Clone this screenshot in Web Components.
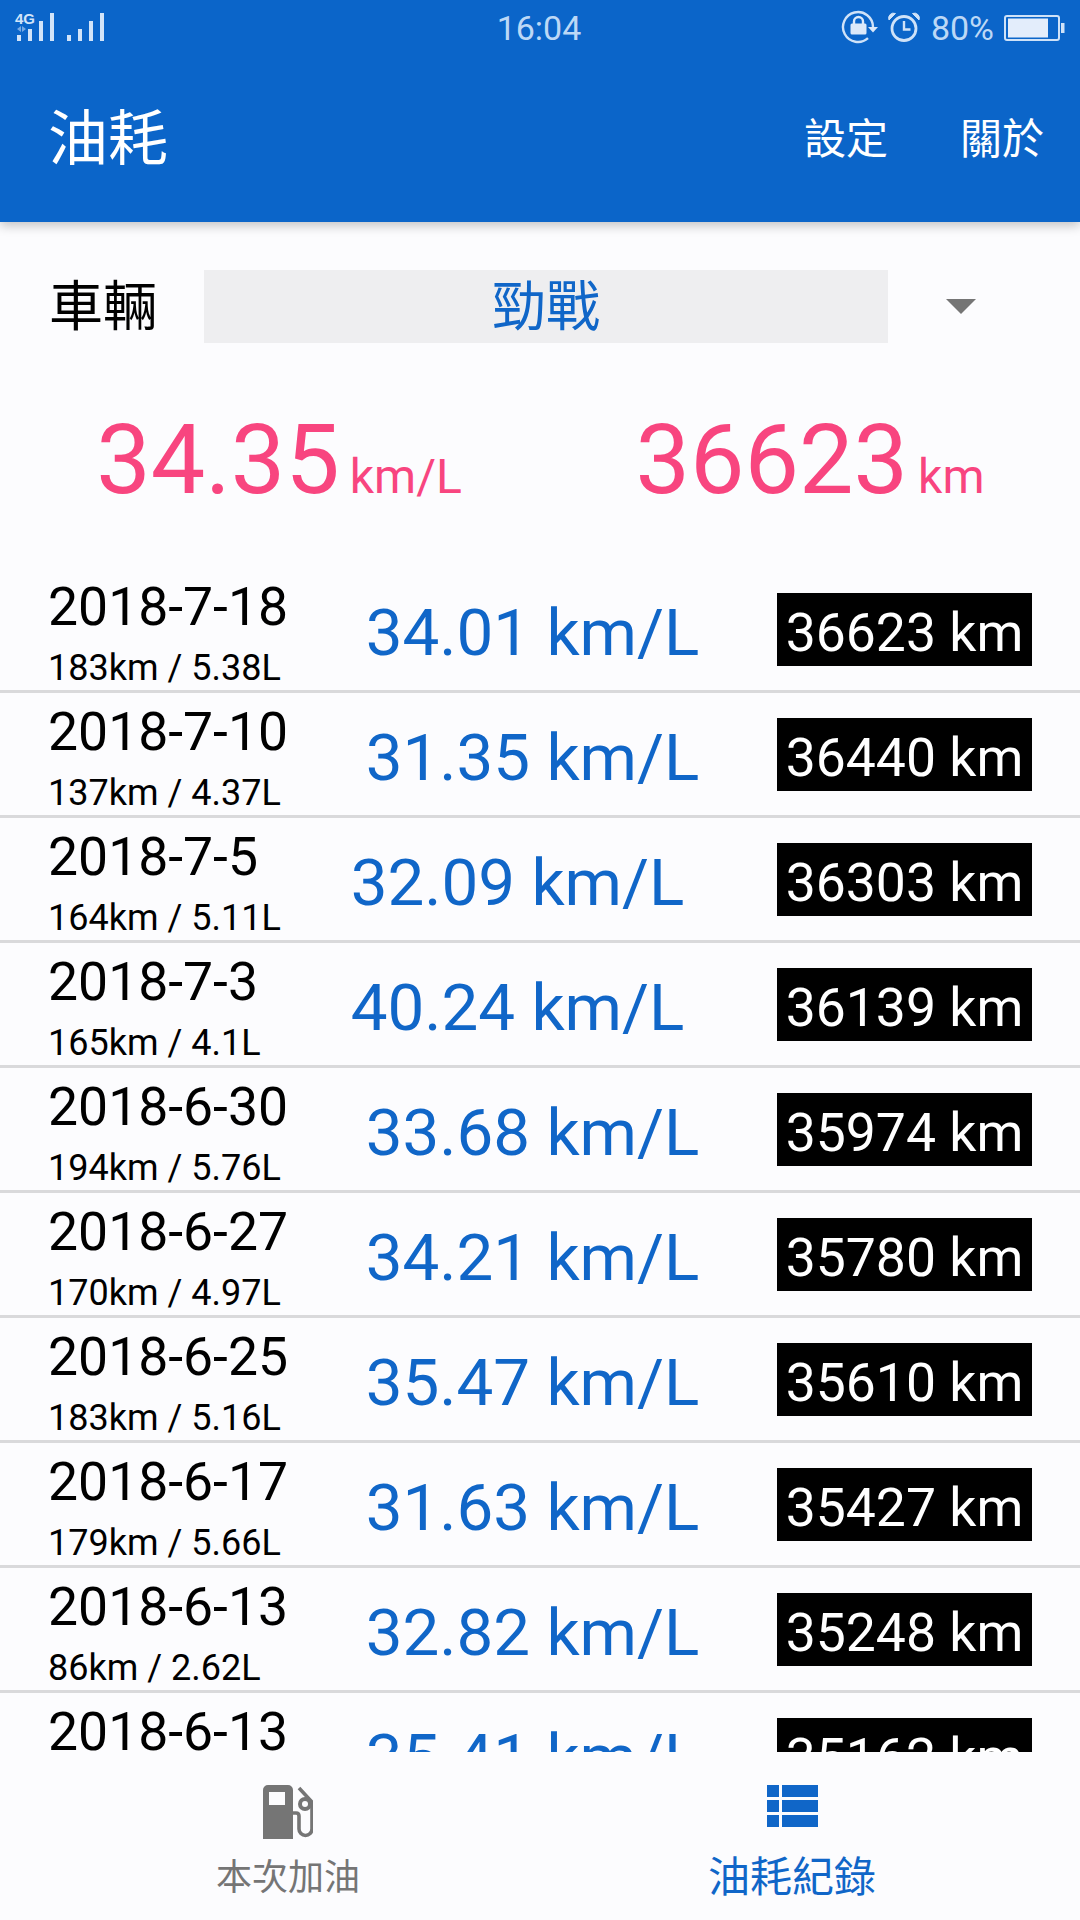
<!DOCTYPE html>
<html>
<head>
<meta charset="utf-8">
<style>
  html, body { margin: 0; padding: 0; background: #fcfcfe; }
  body { width: 1080px; height: 1920px; overflow: hidden; font-family: Roboto, "Noto Sans CJK TC", sans-serif; }
  fuel-app { height: 1920px; }
</style>
</head>
<body>
<fuel-app></fuel-app>
<script>
class StatusBar extends HTMLElement {
  constructor() {
    super();
    this.attachShadow({ mode: 'open' });
    this.shadowRoot.innerHTML = `
      <style>
        :host { display: grid; grid-template-columns: 1fr auto 1fr; align-items: center; height: 56px; color: #bcd8f6; font-size: 34px; }
        .left { padding-left: 15px; display: flex; align-items: center; height: 56px; }
        .net { position: relative; display: block; width: 92px; height: 56px; }
        .net b { position: absolute; left: 0; top: 11px; font: bold 15px/15px "Liberation Sans", sans-serif; color: #d2e4f9; }
        .net svg { position: absolute; left: 0; top: 0; }
        .clock { line-height: 56px; margin-left: -2px; }
        .right { display: flex; justify-content: flex-end; align-items: center; padding-right: 15px; height: 56px; }
        .right svg { display: block; }
        .pct { margin: 0 10px 0 11px; line-height: 56px; }
      </style>
      <div class="left">
        <span class="net">
          <b>4G</b>
          <svg width="92" height="56" fill="#d2e4f9">
            <path d="M2 35h4v6H2zM13 29h4v12h-4zM24 21h4v20h-4zM35 13h4v28h-4zM52 35h4v6h-4zM63 29h4v12h-4zM74 21h4v20h-4zM85 13h4v28h-4z"/>
            <path d="M6 26L2 29l4 3zM7 26l4 3-4 3z" opacity=".55"/>
          </svg>
        </span>
      </div>
      <div class="clock">16:04</div>
      <div class="right">
        <svg width="38" height="36" viewBox="0 0 38 36" fill="none" stroke="#cfe2f8" stroke-width="2.400">
          <path d="M27 28.200A15 15 0 1 1 32 17"/>
          <path d="M27 17h10l-5 5.500z" fill="#dbe9fa" stroke="none"/>
          <path d="M11 13.500h13a1.500 1.500 0 0 1 1.500 1.500v8a1.500 1.500 0 0 1-1.500 1.500H11A1.500 1.500 0 0 1 9.500 23v-8a1.500 1.500 0 0 1 1.500-1.500z" fill="#dbe9fa" stroke="none"/>
          <path d="M13 14v-2.500a4.500 4.500 0 0 1 9 0V14" stroke="#dbe9fa"/>
        </svg>
        <svg style="margin-left:9px" width="32" height="32" viewBox="0 0 32 32" fill="none" stroke="#cfe2f8" stroke-width="2.800">
          <circle cx="16" cy="16.500" r="12"/>
          <path d="M16 9v8.500h6.500" stroke-width="2.400"/>
          <path d="M1 8L7.500 1.500A5 5 0 0 0 1 8zM31 8L24.500 1.500A5 5 0 0 1 31 8z" fill="#cfe2f8" stroke-width="1"/>
        </svg>
        <span class="pct">80%</span>
        <svg width="61" height="26" viewBox="0 0 61 26" fill="none">
          <rect x="1" y="1" width="54" height="24" rx="2" stroke="#cfe2f8" stroke-width="2"/>
          <rect x="4" y="3.500" width="40" height="19" fill="#e3edfb"/>
          <rect x="57" y="8" width="3.500" height="10" fill="#cfe2f8"/>
        </svg>
      </div>
    `;
  }
}

class AppBar extends HTMLElement {
  constructor() {
    super();
    this.attachShadow({ mode: 'open' });
    this.shadowRoot.innerHTML = `
      <style>
        :host { display: block; position: relative; z-index: 2; background: #0b65c9; color: #fff; height: 222px; box-shadow: 0 4px 10px rgba(0,0,0,.22); }
        .bar { display: flex; align-items: center; height: 166px; padding: 1px 36px 0 48px; box-sizing: border-box; }
        h1 { flex: 1; margin: 0; font-size: 60px; font-weight: 400; line-height: 80px; }
        a { font-size: 42px; line-height: 60px; margin-left: 72px; }
      </style>
      <status-bar></status-bar>
      <div class="bar">
        <h1>油耗</h1>
        <a>設定</a>
        <a>關於</a>
      </div>
    `;
  }
}

class VehiclePicker extends HTMLElement {
  constructor() {
    super();
    this.attachShadow({ mode: 'open' });
    this.shadowRoot.innerHTML = `
      <style>
        :host { display: flex; align-items: center; height: 73px; margin-top: 48px; padding-left: 49px; font-size: 54px; color: #000; }
        .label { width: 155px; line-height: 76px; height: 73px; }
        .value { width: 684px; height: 73px; line-height: 76px; text-align: center; background: #eeeef0; color: #1066c8; }
        .arrow { width: 0; height: 0; margin-left: 58px; border-left: 15px solid transparent; border-right: 15px solid transparent; border-top: 15px solid #757575; }
      </style>
      <span class="label">車輛</span>
      <span class="value"><slot></slot></span>
      <span class="arrow"></span>
    `;
  }
}

class StatValue extends HTMLElement {
  constructor() {
    super();
    this.attachShadow({ mode: 'open' });
    this.shadowRoot.innerHTML = `
      <style>
        :host { display: block; text-align: center; color: #f8457f; white-space: nowrap; }
        .num { font-size: 97px; line-height: 110px; }
        .unit { font-size: 48px; margin-left: 10px; }
      </style>
      <span class="num"></span><span class="unit"></span>
    `;
  }
  connectedCallback() {
    this.shadowRoot.querySelector('.num').textContent = this.getAttribute('value');
    this.shadowRoot.querySelector('.unit').textContent = this.getAttribute('unit');
  }
}

class FuelRow extends HTMLElement {
  constructor() {
    super();
    this.attachShadow({ mode: 'open' });
    this.shadowRoot.innerHTML = `
      <style>
        :host { display: flex; box-sizing: border-box; height: 125px; flex: none; padding: 0 48px; border-bottom: 3px solid #d9d9db; color: #000; }
        .date { display: flex; flex-direction: column; }
        .day { font-size: 53.500px; line-height: 60px; margin-top: 9px; white-space: nowrap; }
        .trip { width: 0; font-size: 36px; line-height: 40px; margin-top: 11px; white-space: nowrap; }
        .eff { flex: 1; text-align: center; font-size: 65.500px; line-height: 74px; margin-top: 28px; color: #1066c8; white-space: nowrap; }
        .odo { align-self: flex-start; box-sizing: border-box; width: 255px; height: 73px; margin-top: 25px; padding-top: 3px; background: #000; color: #fff; font-size: 53.500px; line-height: 73px; text-align: center; white-space: nowrap; overflow: hidden; }
      </style>
      <div class="date"><span class="day"></span><span class="trip"></span></div>
      <div class="eff"></div>
      <div class="odo"></div>
    `;
  }
  connectedCallback() {
    const root = this.shadowRoot;
    root.querySelector('.day').textContent = this.getAttribute('day');
    root.querySelector('.trip').textContent = this.getAttribute('trip');
    root.querySelector('.eff').textContent = this.getAttribute('eff') + ' km/L';
    root.querySelector('.odo').textContent = this.getAttribute('odo') + ' km';
  }
}

class NavItem extends HTMLElement {
  constructor() {
    super();
    this.attachShadow({ mode: 'open' });
    this.shadowRoot.innerHTML = `
      <style>
        :host { display: flex; flex-direction: column; align-items: center; color: #757575; font-size: 36px; }
        :host([active]) { color: #1066c8; font-size: 42px; }
        .icon { height: 66px; display: flex; align-items: flex-start; }
        .label { line-height: 54px; }
      </style>
      <div class="icon"><slot name="icon"></slot></div>
      <div class="label"><slot></slot></div>
    `;
  }
}

class BottomNav extends HTMLElement {
  constructor() {
    super();
    this.attachShadow({ mode: 'open' });
    this.shadowRoot.innerHTML = `
      <style>
        :host { display: grid; grid-template-columns: 1fr 1fr; box-sizing: border-box; height: 168px; padding: 33px 36px 0; background: #fcfcfe; }
      </style>
      <slot></slot>
    `;
  }
}

class FuelApp extends HTMLElement {
  constructor() {
    super();
    this.attachShadow({ mode: 'open' });
    const logs = [
      ['2018-7-18', '183km / 5.38L', '34.01', '36623'],
      ['2018-7-10', '137km / 4.37L', '31.35', '36440'],
      ['2018-7-5', '164km / 5.11L', '32.09', '36303'],
      ['2018-7-3', '165km / 4.1L', '40.24', '36139'],
      ['2018-6-30', '194km / 5.76L', '33.68', '35974'],
      ['2018-6-27', '170km / 4.97L', '34.21', '35780'],
      ['2018-6-25', '183km / 5.16L', '35.47', '35610'],
      ['2018-6-17', '179km / 5.66L', '31.63', '35427'],
      ['2018-6-13', '86km / 2.62L', '32.82', '35248'],
      ['2018-6-13', '', '35.41', '35162']
    ];
    const rows = logs.map(l => `<fuel-row day="${l[0]}" trip="${l[1]}" eff="${l[2]}" odo="${l[3]}"></fuel-row>`).join('');
    this.shadowRoot.innerHTML = `
      <style>
        :host { display: flex; flex-direction: column; }
        .stats { display: grid; grid-template-columns: 558px 1fr; height: 225px; box-sizing: border-box; padding: 62px 18px 0 0; }
        .list { flex: 1; min-height: 0; display: flex; flex-direction: column; overflow: hidden; }
      </style>
      <app-bar></app-bar>
      <vehicle-picker>勁戰</vehicle-picker>
      <div class="stats">
        <stat-value value="34.35" unit="km/L"></stat-value>
        <stat-value value="36623" unit="km"></stat-value>
      </div>
      <div class="list">${rows}</div>
      <bottom-nav>
        <nav-item>
          <svg slot="icon" width="50" height="54" viewBox="0 0 50 54" fill="#757575">
            <path fill-rule="evenodd" d="M5 0h20a5 5 0 0 1 5 5v49H0V5a5 5 0 0 1 5-5zM6 7v13h16V7z"/>
            <path d="M30 28h3q3 0 3 3v13a6.500 6.500 0 0 0 13 0V17L36 3" fill="none" stroke="#757575" stroke-width="3.600"/>
            <circle cx="42" cy="19" r="7"/>
            <circle cx="42" cy="19" r="3" fill="#fcfcfe"/>
          </svg>
          本次加油
        </nav-item>
        <nav-item active>
          <svg slot="icon" width="51" height="42" viewBox="0 0 51 42" fill="#1066c8">
            <path d="M0 0h12v12H0zM15 0h36v12H15zM0 15h12v12H0zM15 15h36v12H15zM0 30h12v12H0zM15 30h36v12H15z"/>
          </svg>
          油耗紀錄
        </nav-item>
      </bottom-nav>
    `;
  }
}

customElements.define('status-bar', StatusBar);
customElements.define('app-bar', AppBar);
customElements.define('vehicle-picker', VehiclePicker);
customElements.define('stat-value', StatValue);
customElements.define('fuel-row', FuelRow);
customElements.define('nav-item', NavItem);
customElements.define('bottom-nav', BottomNav);
customElements.define('fuel-app', FuelApp);
</script>
</body>
</html>
